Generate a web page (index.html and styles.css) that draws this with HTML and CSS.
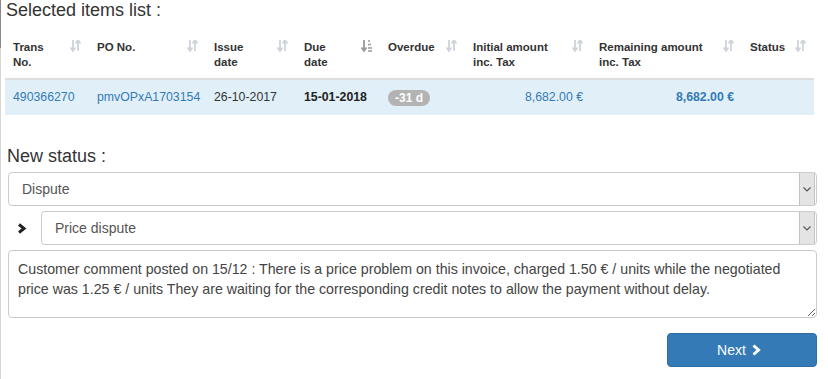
FILE: index.html
```html
<!DOCTYPE html>
<html lang="en">
<head>
<meta charset="utf-8">
<title>Selected items</title>
<link rel="stylesheet" href="styles.css">
</head>
<body>
<div class="page">
  <h1 class="title">Selected items list :</h1>
  <table class="items">
    <colgroup>
      <col class="c1"><col class="c2"><col class="c3"><col class="c4"><col class="c5"><col class="c6"><col class="c7"><col class="c8">
    </colgroup>
    <thead>
      <tr>
        <th>Trans<br>No.<svg class="sort" viewBox="0 0 11 12"><path d="M3 0v9M0.5 7.5L3 11 5.5 7.5M8 11V2M5.5 3.5L8 0 10.5 3.5"/></svg></th>
        <th>PO No.<svg class="sort" viewBox="0 0 11 12"><path d="M3 0v9M0.5 7.5L3 11 5.5 7.5M8 11V2M5.5 3.5L8 0 10.5 3.5"/></svg></th>
        <th>Issue<br>date<svg class="sort" viewBox="0 0 11 12"><path d="M3 0v9M0.5 7.5L3 11 5.5 7.5M8 11V2M5.5 3.5L8 0 10.5 3.5"/></svg></th>
        <th>Due<br>date<svg class="sort sorted" viewBox="0 0 11 12"><path d="M3 0v9M0.5 7.5L3 11 5.5 7.5"/><path class="bars" d="M7 1h2M7 4.5h3M7 8h4M7 11h4"/></svg></th>
        <th>Overdue<svg class="sort" viewBox="0 0 11 12"><path d="M3 0v9M0.5 7.5L3 11 5.5 7.5M8 11V2M5.5 3.5L8 0 10.5 3.5"/></svg></th>
        <th>Initial amount<br>inc. Tax<svg class="sort" viewBox="0 0 11 12"><path d="M3 0v9M0.5 7.5L3 11 5.5 7.5M8 11V2M5.5 3.5L8 0 10.5 3.5"/></svg></th>
        <th>Remaining amount<br>inc. Tax<svg class="sort" viewBox="0 0 11 12"><path d="M3 0v9M0.5 7.5L3 11 5.5 7.5M8 11V2M5.5 3.5L8 0 10.5 3.5"/></svg></th>
        <th>Status<svg class="sort" viewBox="0 0 11 12"><path d="M3 0v9M0.5 7.5L3 11 5.5 7.5M8 11V2M5.5 3.5L8 0 10.5 3.5"/></svg></th>
      </tr>
    </thead>
    <tbody>
      <tr>
        <td><a class="link" href="#">490366270</a></td>
        <td><a class="link" href="#">pmvOPxA1703154</a></td>
        <td>26-10-2017</td>
        <td class="strong">15-01-2018</td>
        <td><span class="badge">-31 d</span></td>
        <td class="num link-text">8,682.00 €</td>
        <td class="num link-text strong">8,682.00 €</td>
        <td></td>
      </tr>
    </tbody>
  </table>

  <h2 class="subtitle">New status :</h2>
  <div class="select select-full">
    <span class="select-value">Dispute</span>
    <span class="select-btn"><svg viewBox="0 0 8 5"><path d="M0.5 0.5L4 4 7.5 0.5"/></svg></span>
  </div>
  <div class="sub-row">
    <svg class="chev" viewBox="0 0 10 11"><path d="M2 1.5L7 5.5 2 9.5"/></svg>
    <div class="select select-grow">
      <span class="select-value">Price dispute</span>
      <span class="select-btn"><svg viewBox="0 0 8 5"><path d="M0.5 0.5L4 4 7.5 0.5"/></svg></span>
    </div>
  </div>
  <textarea class="comment">Customer comment posted on 15/12 : There is a price problem on this invoice, charged 1.50 € / units while the negotiated price was 1.25 € / units They are waiting for the corresponding credit notes to allow the payment without delay.</textarea>
  <div class="actions">
    <button class="btn-next" type="button">Next<svg viewBox="0 0 10 12"><path d="M2.5 1.5L7.5 6 2.5 10.5"/></svg></button>
  </div>
</div>
</body>
</html>
```

FILE: styles.css
```css
html {
  background: #fff linear-gradient(to bottom, #8a8a8a 0, #8a8a8a 48px, #d6d6d6 48px, #d6d6d6 100%) no-repeat 0 0 / 1px 100%;
}
body {
  margin: 0;
  font-family: "Liberation Sans", Arial, sans-serif;
  color: #333;
}
.page {
  width: 828px;
  height: 379px;
  overflow: hidden;
}
.title {
  margin: 0 0 12px 6px;
  font-size: 18px;
  line-height: 20px;
  font-weight: normal;
  color: #333;
}
.items {
  margin-left: 5px;
  width: 809px;
  table-layout: fixed;
  border-collapse: collapse;
}
.c1 { width: 84px; }
.c2 { width: 117px; }
.c3 { width: 90px; }
.c4 { width: 84px; }
.c5 { width: 85px; }
.c6 { width: 126px; }
.c7 { width: 151px; }
.c8 { width: 72px; }
.items th {
  position: relative;
  text-align: left;
  vertical-align: top;
  font-size: 11.5px;
  line-height: 15px;
  font-weight: bold;
  color: #333;
  padding: 8px 22px 8px 8px;
  border-bottom: 2px solid #ddd;
  white-space: nowrap;
}
.sort {
  position: absolute;
  right: 8px;
  top: 8px;
  width: 11px;
  height: 12px;
}
.sort path {
  fill: none;
  stroke: #cfd4dc;
  stroke-width: 1.8;
}
.sort.sorted path {
  stroke: #9a9a9a;
}
.sort.sorted .bars {
  stroke-width: 1.6;
}
.items td {
  background: #e1f0f8;
  padding: 8px;
  font-size: 12.3px;
  line-height: 19px;
  white-space: nowrap;
  color: #333;
}
.link, .link-text {
  color: #337ab7;
  text-decoration: none;
}
.items td.link-text { color: #337ab7; }
.strong { font-weight: bold; }
.items td.strong:not(.link-text) { color: #222; }
.num { text-align: right; }
.badge {
  display: inline-block;
  width: 42px;
  height: 16px;
  line-height: 16px;
  border-radius: 8px;
  background: #b3b3b3;
  color: #fff;
  text-align: center;
  font-size: 12px;
  font-weight: bold;
  vertical-align: middle;
}
.subtitle {
  margin: 31px 0 6px 7px;
  font-size: 18px;
  line-height: 20px;
  font-weight: normal;
  color: #333;
}
.select {
  display: flex;
  box-sizing: border-box;
  height: 34px;
  border: 1px solid #ccc;
  border-radius: 4px;
  background: #fff;
}
.select-full {
  margin-left: 8px;
  width: 809px;
}
.select-value {
  flex: 1;
  display: flex;
  align-items: center;
  padding-left: 13px;
  font-size: 14px;
  color: #555;
}
.select-btn {
  box-sizing: border-box;
  width: 16px;
  margin-right: 1px;
  display: flex;
  align-items: center;
  justify-content: center;
  background: #e4e4e4;
  border: 1px solid #c2c2c2;
  border-top: 0;
  border-bottom: 0;
}
.select-btn svg {
  width: 8px;
  height: 5px;
}
.select-btn path {
  fill: none;
  stroke: #555;
  stroke-width: 1.2;
}
.sub-row {
  display: flex;
  align-items: center;
  margin: 5px 0 0 0;
}
.chev {
  width: 10px;
  height: 11px;
  margin: 0 14px 0 17px;
}
.chev path {
  fill: none;
  stroke: #222;
  stroke-width: 3;
}
.select-grow {
  width: 776px;
}
.comment {
  display: block;
  box-sizing: border-box;
  margin: 5px 0 0 8px;
  width: 809px;
  height: 68px;
  padding: 8px 12px 8px 9px;
  border: 1px solid #ccc;
  border-radius: 4px;
  font-family: "Liberation Sans", Arial, sans-serif;
  font-size: 14.2px;
  line-height: 20px;
  color: #444;
  resize: vertical;
  outline: none;
}
.actions {
  display: flex;
  justify-content: flex-end;
  margin-top: 15px;
  padding-right: 11px;
}
.btn-next {
  display: flex;
  align-items: center;
  justify-content: center;
  gap: 5px;
  width: 150px;
  height: 34px;
  box-sizing: border-box;
  background: #337ab7;
  border: 1px solid #2e6da4;
  border-radius: 4px;
  color: #fff;
  font-family: "Liberation Sans", Arial, sans-serif;
  font-size: 14px;
  padding: 0 6px 0 0;
}
.btn-next svg {
  width: 10px;
  height: 12px;
}
.btn-next path {
  fill: none;
  stroke: #fff;
  stroke-width: 3;
}
```
